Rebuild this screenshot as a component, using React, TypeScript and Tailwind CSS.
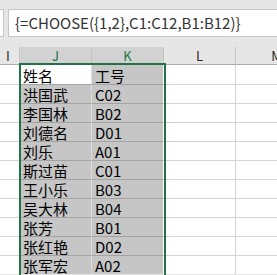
const ROWS: [string, string][] = [
  ["姓名", "工号"],
  ["洪国武", "C02"],
  ["李国林", "B02"],
  ["刘德名", "D01"],
  ["刘乐", "A01"],
  ["斯过苗", "C01"],
  ["王小乐", "B03"],
  ["吴大林", "B04"],
  ["张芳", "B01"],
  ["张红艳", "D02"],
  ["张军宏", "A02"],
];

const FONT = "font-['Noto_Sans_CJK_SC','Noto_Sans',sans-serif]";

function HeaderCell({
  label,
  width,
  selected,
  align = "center",
}: {
  label: string;
  width: string;
  selected?: boolean;
  align?: "center" | "left";
}) {
  return (
    <div
      className={`${width} flex h-full shrink-0 items-center border-r border-b text-[13px] ${
        selected
          ? "border-r-[#c2c2c2] border-b-[#217346] bg-[#d2d2d2] text-[#217346]"
          : "border-r-[#c6c6c6] border-b-[#ababab] bg-[#e6e6e6] text-[#262626]"
      } ${align === "center" ? "justify-center" : "justify-start pl-[6px]"}`}
    >
      {label}
    </div>
  );
}

export default function App() {
  return (
    <div className={`relative h-[275px] w-[277px] overflow-hidden bg-[#e6e6e6] ${FONT}`}>
      {/* formula bar */}
      <div className="flex h-[47px] pt-[9px] pb-[10px]">
        <div className="w-[4px] shrink-0 border-y border-r border-[#c6c6c6] bg-white" />
        <div className="ml-[4px] -mr-[2px] flex flex-1 items-center border border-[#c6c6c6] bg-white pl-[6px] text-[15px] text-[#333]">
          {"{=CHOOSE({1,2},C1:C12,B1:B12)}"}
        </div>
      </div>

      {/* column headers */}
      <div className="flex h-[18px] leading-none">
        <HeaderCell label="I" width="w-[20px]" align="left" />
        <HeaderCell label="J" width="w-[72px]" selected />
        <HeaderCell label="K" width="w-[72px]" selected />
        <HeaderCell label="L" width="w-[72px]" />
        <HeaderCell label="M" width="w-[82px]" />
      </div>

      {/* grid */}
      <div className="flex flex-col bg-white">
        {ROWS.map(([name, id], i) => (
          <div key={i} className="flex h-[19px] text-[15px] leading-[16px] text-black">
            <div
              className={`w-[20px] shrink-0 border-r border-r-[#d4d4d4] ${
                i === 0 ? "" : "border-t border-t-[#d4d4d4]"
              }`}
            />
            <div
              className={`flex w-[72px] shrink-0 items-end border-r border-r-[#dcdcdc] pl-[3px] ${
                i === 0 ? "bg-white" : "border-t border-t-[#a3a3a3] bg-[#c6c6c6]"
              }`}
            >
              {name}
            </div>
            <div
              className={`flex w-[72px] shrink-0 items-end border-r border-r-white bg-[#c6c6c6] pl-[3px] ${
                i === 0 ? "" : "border-t border-t-[#a3a3a3]"
              }`}
            >
              {id}
            </div>
            <div
              className={`w-[72px] shrink-0 border-r border-r-[#d4d4d4] ${
                i === 0 ? "" : "border-t border-t-[#d4d4d4]"
              }`}
            />
            <div className={`w-[82px] shrink-0 ${i === 0 ? "" : "border-t border-t-[#d4d4d4]"}`} />
          </div>
        ))}
      </div>

      {/* selection outline */}
      <div className="pointer-events-none absolute top-[63px] left-[19px] h-[240px] w-[147px] border-2 border-[#217346]" />
    </div>
  );
}
